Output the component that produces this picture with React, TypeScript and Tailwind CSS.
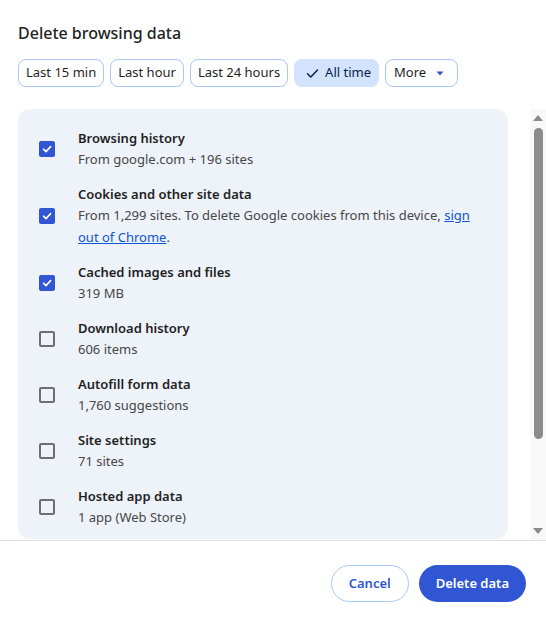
import React from "react";

const items = [
  { title: "Browsing history", sub: "From google.com + 196 sites", checked: true },
  { title: "Cookies and other site data", sub: null, checked: true },
  { title: "Cached images and files", sub: "319 MB", checked: true },
  { title: "Download history", sub: "606 items", checked: false },
  { title: "Autofill form data", sub: "1,760 suggestions", checked: false },
  { title: "Site settings", sub: "71 sites", checked: false },
  { title: "Hosted app data", sub: "1 app (Web Store)", checked: false },
];

function Checkbox({ checked }: { checked: boolean }) {
  if (checked) {
    return (
      <div className="w-4 h-4 rounded-[2px] bg-[#3056d3] flex items-center justify-center shrink-0">
        <svg width="12" height="12" viewBox="0 0 12 12" fill="none">
          <path d="M2.5 6.2 L5 8.6 L9.6 3.6" stroke="white" strokeWidth="1.6" strokeLinecap="round" strokeLinejoin="round" />
        </svg>
      </div>
    );
  }
  return <div className="w-4 h-4 rounded-[2px] border-2 border-[#6e6e6e] shrink-0" />;
}

function Chip({ children, active }: { children: React.ReactNode; active?: boolean }) {
  return (
    <div
      className={
        active
          ? "h-7 flex items-center rounded-lg bg-[#d3e3fd] text-[#041e49] pl-[12px] pr-[8px] text-[13px]"
          : "h-7 flex items-center rounded-lg border border-[#a8c7fa] text-[#1f1f1f] px-[7px] text-[13px]"
      }
    >
      {children}
    </div>
  );
}

export default function App() {
  return (
    <div
      className="w-[546px] h-[618px] bg-white flex flex-col"
      style={{ fontFamily: '"Noto Sans", "Open Sans", Arial, sans-serif' }}
    >
      <h1 className="pl-[18px] pt-[21px] text-[16px] leading-6 font-medium text-[#1f1f1f]">
        Delete browsing data
      </h1>
      <div className="flex gap-[6px] pl-[18px] mt-[14px]">
        <Chip>Last 15 min</Chip>
        <Chip>Last hour</Chip>
        <Chip>Last 24 hours</Chip>
        <Chip active>
          <svg width="13" height="13" viewBox="0 0 13 13" fill="none" className="mr-[6px]">
            <path d="M1.5 6.8 L4.8 10 L11.5 3" stroke="#041e49" strokeWidth="1.4" strokeLinecap="round" strokeLinejoin="round" />
          </svg>
          All time
        </Chip>
        <div className="h-7 flex items-center rounded-lg border border-[#a8c7fa] text-[#1f1f1f] pl-[8px] pr-[13px] text-[13px]">
          More
          <svg width="8" height="5" viewBox="0 0 8 5" className="ml-[10px]">
            <path d="M0.5 0.5 L7.5 0.5 L4 4.5 Z" fill="#3056d3" />
          </svg>
        </div>
      </div>

      <div className="flex mt-[22px] h-[431px]">
        <div className="ml-[18px] w-[490px] h-[430px] rounded-[12px] bg-[#eef2f9] overflow-hidden pt-[12px]">
          {items.map((it, i) => (
            <div key={i} className="flex items-center py-[7px]">
              <div className="w-[60px] pl-[21px] flex shrink-0">
                <Checkbox checked={it.checked} />
              </div>
              <div className="flex flex-col">
                <div className="text-[13px] leading-5 font-semibold text-[#1f1f1f]">{it.title}</div>
                {it.sub ? (
                  <div className="text-[13px] leading-[22px] text-[#474747]">{it.sub}</div>
                ) : (
                  <div className="text-[13px] leading-[22px] text-[#474747]">
                    From 1,299 sites. To delete Google cookies from this device,{" "}
                    <span className="text-[#0b57d0] underline">sign</span>
                    <br />
                    <span className="text-[#0b57d0] underline">out of Chrome</span>.
                  </div>
                )}
              </div>
            </div>
          ))}
        </div>
        <div className="ml-[22px] w-4 h-full bg-[#f8f8f8] flex flex-col items-center">
          <svg width="10" height="6" viewBox="0 0 10 6" className="mt-[6px]">
            <path d="M0 6 L5 0 L10 6 Z" fill="#8a8a8a" />
          </svg>
          <div className="mt-[7px] w-[9px] h-[311px] rounded-full bg-[#8c8c8c]" />
          <div className="flex-1" />
          <svg width="10" height="6" viewBox="0 0 10 6" className="mb-[6px]">
            <path d="M0 0 L10 0 L5 6 Z" fill="#8a8a8a" />
          </svg>
        </div>
      </div>

      <div className="border-t border-[#e0e0e0] flex justify-end gap-[10px] pr-[20px] pt-[24px]">
        <button className="h-[37px] px-[17px] rounded-full border border-[#a8c7fa] text-[#3056d3] text-[13px] font-semibold">
          Cancel
        </button>
        <button className="h-[37px] px-[17px] rounded-full bg-[#3056d3] text-white text-[13px] font-semibold">
          Delete data
        </button>
      </div>
    </div>
  );
}
